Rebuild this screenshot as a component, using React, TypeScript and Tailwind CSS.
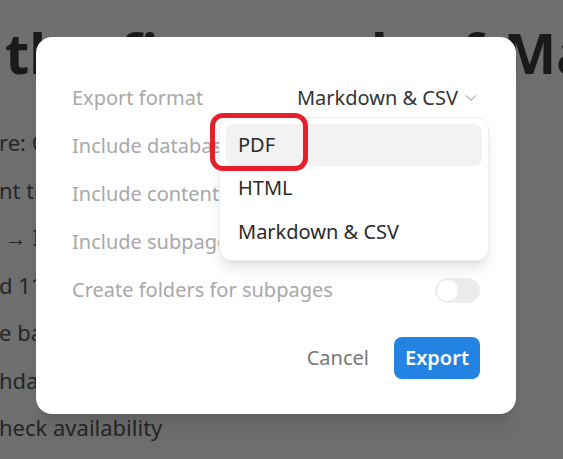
import { ChevronDown } from "lucide-react";

const options = ["Include databases", "Include content", "Include subpages", "Create folders for subpages"];
const bodyLines = [
  "re: Core pages",
  "nt team",
  "\u00a0→ Issue",
  "d 11 articles",
  "e base",
  "hdate",
  "heck availability",
];

export default function App() {
  return (
    <div
      className="relative h-[459px] w-[563px] overflow-hidden bg-[#6f6f6f]"
      style={{ fontFamily: '"Noto Sans", "Open Sans", sans-serif' }}
    >
      {/* Dimmed page behind */}
      <div className="flex flex-col">
        <h1 className="ml-[5px] mt-[22px] whitespace-nowrap text-[56px] font-bold leading-[60px] text-[#1a1a1a] [word-spacing:6px]">
          the first week of May
        </h1>
        <div className="mt-[37px] flex flex-col text-[22px] leading-[47.5px] text-[#262626]">
          {bodyLines.map((l) => (
            <div key={l} className="-ml-[1px] whitespace-nowrap">
              {l}
            </div>
          ))}
        </div>
      </div>

      {/* Modal */}
      <div className="absolute left-[36px] top-[37px] w-[480px] rounded-[16px] bg-white px-[36px] pb-[35px] pt-[37px] shadow-xl">
        <div className="flex h-[48px] items-center justify-between">
          <span className="text-[20px] text-[#a8a8a8]">Export format</span>
          <span className="flex items-center gap-[4px] text-[20px] text-[#333]">
            Markdown & CSV
            <ChevronDown className="h-[18px] w-[18px] text-[#b5b5b5]" strokeWidth={1.5} />
          </span>
        </div>
        {options.map((o, i) => (
          <div key={o} className="flex h-[48px] items-center justify-between">
            <span className="text-[20px] text-[#a8a8a8]">{o}</span>
            {i === 3 && (
              <span className="flex h-[25px] w-[45px] items-center rounded-full bg-[#ececec] px-[2px]">
                <span className="h-[21px] w-[21px] rounded-full bg-white" />
              </span>
            )}
          </div>
        ))}
        <div className="mt-[23px] flex items-center justify-end gap-[25px]">
          <button className="text-[20px] text-[#777]">Cancel</button>
          <button className="flex h-[42px] w-[86px] items-center justify-center rounded-[8px] bg-[#2383e2] text-[20px] font-semibold text-white">
            Export
          </button>
        </div>

        {/* Dropdown menu */}
        <div className="absolute left-[183px] top-[80px] w-[270px] rounded-[12px] border border-[#eee] bg-white p-[6px] shadow-lg">
          <div className="flex h-[42px] items-center rounded-[8px] bg-[#f2f2f2] px-[12px] text-[20px] text-[#2b2b2b]">PDF</div>
          <div className="flex h-[44px] items-center px-[12px] text-[20px] text-[#2b2b2b]">HTML</div>
          <div className="flex h-[44px] items-center px-[12px] text-[20px] text-[#2b2b2b]">Markdown & CSV</div>
        </div>

        {/* Annotation */}
        <div className="absolute left-[174px] top-[76px] h-[58px] w-[98px] rounded-[13px] border-[5px] border-[#e5202a]" />
      </div>
    </div>
  );
}
